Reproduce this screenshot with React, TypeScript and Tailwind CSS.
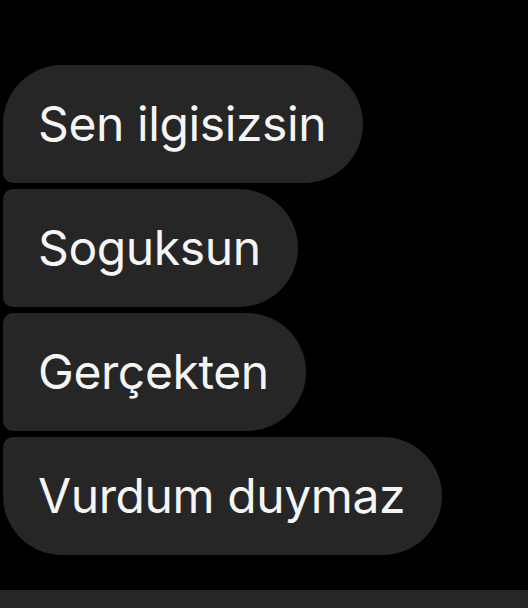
const messages = ['Sen ilgisizsin', 'Soguksun', 'Gerçekten', 'Vurdum duymaz'];

function Bubble({ text, first, last }: { text: string; first: boolean; last: boolean }) {
  const corners = [
    'rounded-r-[59px]',
    first ? 'rounded-tl-[59px]' : 'rounded-tl-[10px]',
    last ? 'rounded-bl-[59px]' : 'rounded-bl-[10px]',
  ].join(' ');

  return (
    <div className={`w-fit h-[118px] flex items-center pl-[35px] pr-[37px] bg-[#262626] ${corners}`}>
      <span className="text-[48px] leading-none tracking-[-0.4px] text-[#f5f5f5]">{text}</span>
    </div>
  );
}

export default function App() {
  return (
    <div
      className="w-[528px] h-[608px] bg-black flex flex-col overflow-hidden"
      style={{ fontFamily: 'Inter, Roboto, sans-serif' }}
    >
      <div className="flex flex-col gap-[6px] pt-[65px] pl-[3px] flex-1">
        {messages.map((m, i) => (
          <Bubble key={m} text={m} first={i === 0} last={i === messages.length - 1} />
        ))}
      </div>
      {/* composer bar peeking at the bottom */}
      <div className="h-[18px] bg-[#262626]" />
    </div>
  );
}
